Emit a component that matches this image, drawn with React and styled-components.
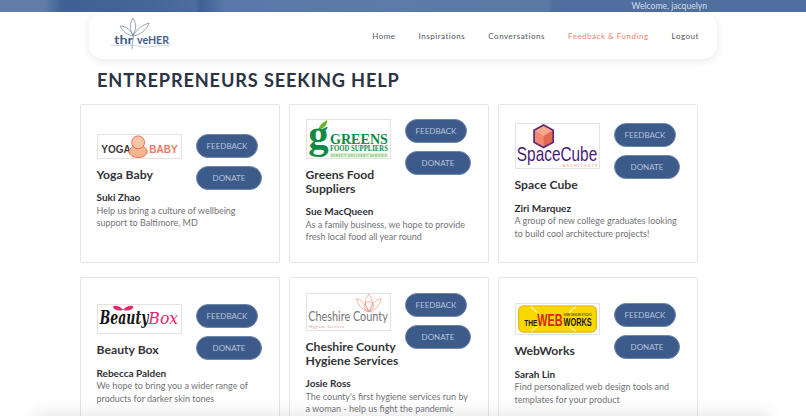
import React from "react";
import styled, { createGlobalStyle } from "styled-components";

const Global = createGlobalStyle`
  html, body {
    margin: 0;
    height: 416px;
    overflow: hidden;
    background: #fff;
    font-family: "Lato", "Open Sans", sans-serif;
  }
  * { box-sizing: border-box; }
`;

const Page = styled.div`
  position: relative;
  width: 806px;
  height: 416px;
  overflow: hidden;
`;

const TopBar = styled.div`
  height: 12px;
  padding-right: 99px;
  display: flex;
  justify-content: flex-end;
  align-items: center;
  background: linear-gradient(90deg, #5f7da8 0, #5f7da8 45px, #3f6193 62px, #456796 150px, #4d6e9d 195px, #3f6193 200px, #44669a 206px, #5a79a8 225px, #5c7ca9 400px, #5a7aa6 548px, #4f6f9e 552px, #4f6f9e 806px);
  color: #d3deee;
  font-size: 8.6px;
`;

const Nav = styled.nav`
  width: 628px;
  height: 46px;
  margin: 1px 0 0 89px;
  padding: 0 18px 0 20px;
  display: flex;
  align-items: center;
  justify-content: space-between;
  border-radius: 14px;
  background: #fff;
  box-shadow: 0 2px 8px rgba(40, 50, 70, 0.1);
`;

const NavLinks = styled.div`
  display: flex;
  gap: 23px;
`;

const NavLink = styled.a`
  font-size: 8px;
  font-weight: 500;
  letter-spacing: 0.5px;
  color: ${(props) => (props.$active ? "#ef8a76" : "#5c5f68")};
`;

const Heading = styled.h1`
  margin: 9px 0 12px 97px;
  font-size: 18.2px;
  line-height: 24px;
  font-weight: 700;
  letter-spacing: 0.85px;
  color: #2b3344;
`;

const Grid = styled.div`
  width: 618px;
  margin-left: 80px;
  display: grid;
  grid-template-columns: repeat(3, 200px);
  grid-auto-rows: 159px;
  column-gap: 9px;
  row-gap: 14px;
`;

const Card = styled.div`
  padding: 0 15px 4px 15.5px;
  display: flex;
  flex-direction: column;
  justify-content: center;
  background: #fff;
  border: 1px solid #e6e6e8;
  border-radius: 2px;
`;

const CardTop = styled.div`
  display: grid;
  grid-template-columns: 99.5px 1fr;
  align-items: start;
`;

const Logo = styled.div`
  width: 85px;
  height: ${(props) => props.$height}px;
  border: 1px solid #e3e3e3;
  background: #fff;
  overflow: hidden;
  svg {
    display: block;
    width: 100%;
    height: 100%;
  }
`;

const Title = styled.h2`
  margin: 9px 0 0;
  font-size: 12.2px;
  line-height: 13.5px;
  font-weight: 700;
  color: #333438;
`;

const Buttons = styled.div`
  display: flex;
  flex-direction: column;
  align-items: flex-start;
  gap: 8px;
  margin-bottom: -20px;
`;

const Pill = styled.button`
  width: ${(props) => props.$width}px;
  height: 24px;
  padding: 0;
  border: 1px solid #6f88ae;
  border-radius: 12px;
  background: #3c5a8a;
  color: #b4c3dc;
  font-family: inherit;
  font-size: 8px;
  text-transform: uppercase;
`;

const Person = styled.h3`
  margin: 10px 0 0;
  font-size: 10px;
  line-height: 13.5px;
  font-weight: 700;
  color: #2f3035;
`;

const Blurb = styled.p`
  margin: 0;
  font-size: 9px;
  line-height: 12.5px;
  color: #727377;
`;

const BottomShade = styled.div`
  position: absolute;
  left: 40px;
  right: 40px;
  bottom: -14px;
  height: 12px;
  box-shadow: 0 0 16px 4px rgba(120, 120, 125, 0.2);
`;

const ThriveLogo = () => (
  <svg width="62" height="36" viewBox="0 0 62 36" fill="none">
    <g stroke="#6d7f9e" strokeWidth="0.7">
      <path d="M24 17 C20 11 21 5 24 0 C27 5 28 11 24 17 Z" />
      <path d="M24 18 C19 17 14 14 11 8 C17 8 22 12 24 18 Z" />
      <path d="M24 18 C27 12 33 7 40 5 C38 12 31 17 24 18 Z" />
      <path d="M24 16 C25 21 23 25 23 31" />
      <path d="M2 27 C12 29 20 25 28 28 C38 31 50 26 61 28" stroke="#9aa9c2" strokeWidth="0.5" />
    </g>
    <text x="5" y="26" fontFamily="Lato, sans-serif" fontWeight="700" fontSize="11.5" fill="#44608c" textLength="19" lengthAdjust="spacingAndGlyphs">thr</text>
    <text x="28" y="26" fontFamily="Lato, sans-serif" fontWeight="700" fontSize="11.5" fill="#44608c" textLength="32" lengthAdjust="spacingAndGlyphs">veHER</text>
  </svg>
);

const YogaLogo = () => (
  <svg viewBox="0 0 85 25">
    <text x="1" y="20" fontFamily="Liberation Sans, sans-serif" fontWeight="700" fontSize="11" fill="#3d3d3d" textLength="32" lengthAdjust="spacingAndGlyphs">YOGA</text>
    <ellipse cx="41" cy="18" rx="10" ry="6.5" fill="#f6b48f" stroke="#e2694a" strokeWidth="1" />
    <circle cx="41" cy="8" r="7" fill="#f8c6a6" stroke="#e2694a" strokeWidth="1" />
    <text x="53" y="20" fontFamily="Liberation Sans, sans-serif" fontWeight="700" fontSize="11" fill="#ec7a64" textLength="31" lengthAdjust="spacingAndGlyphs">BABY</text>
  </svg>
);

const GreensLogo = () => (
  <svg viewBox="0 0 85 40">
    <rect x="23" y="34.5" width="61" height="5" fill="#dcefd2" />
    <path d="M11 10 C12 5 15 3 20 0 C20 6 17 9 11 10 Z" fill="#6cb52d" />
    <text x="0" y="29" fontFamily="Liberation Serif, serif" fontWeight="700" fontSize="43" fill="#0f8a45">g</text>
    <text x="23" y="25" fontFamily="Liberation Serif, serif" fontWeight="700" fontSize="16" fill="#0f8a45" textLength="61" lengthAdjust="spacingAndGlyphs">GREENS</text>
    <text x="23" y="33" fontFamily="Liberation Serif, serif" fontWeight="700" fontSize="8" fill="#0f8a45" textLength="61" lengthAdjust="spacingAndGlyphs">FOOD SUPPLIERS</text>
    <text x="24" y="38.7" fontFamily="Lato, sans-serif" fontSize="4" fill="#6cb56c" textLength="59">DIRECT DELIVERY SERVICE</text>
  </svg>
);

const SpaceLogo = () => (
  <svg viewBox="0 0 85 46">
    <path d="M28 1 L38 6.5 L38 19 L28 24.5 L18 19 L18 6.5 Z" fill="#ef8a70" />
    <path d="M28 1 L38 6.5 L28 12.5 L18 6.5 Z" fill="#f5a78f" />
    <path d="M28 12.5 L38 6.5 L38 19 L28 24.5 Z" fill="#e4674f" />
    <path d="M28 1 L38 6.5 L38 19 L28 24.5 L18 19 L18 6.5 Z" fill="none" stroke="#5d2a7c" strokeWidth="1.8" />
    <text x="0" y="39" fontFamily="Liberation Sans, sans-serif" fontSize="22" fill="#4b1a78" textLength="84" lengthAdjust="spacingAndGlyphs">SpaceCube</text>
    <text x="48" y="45" fontFamily="Lato, sans-serif" fontSize="3.6" fill="#ef8a70" textLength="36">ARCHITECTS</text>
  </svg>
);

const BeautyLogo = () => (
  <svg viewBox="0 0 85 30">
    <path d="M25 5 C21 0 15 0 14 2 C15 6 21 7 25 5 C29 7 35 6 36 2 C35 0 29 0 25 5 Z" fill="#e5286f" />
    <text x="0" y="20" fontFamily="DejaVu Serif, serif" fontStyle="italic" fontWeight="700" fontSize="19" fill="#141414" textLength="52" lengthAdjust="spacingAndGlyphs">Beauty</text>
    <text x="52" y="20" fontFamily="DejaVu Serif, serif" fontStyle="italic" fontSize="18" fill="#e5286f" textLength="32" lengthAdjust="spacingAndGlyphs">Box</text>
  </svg>
);

const CheshireLogo = () => (
  <svg viewBox="0 0 85 38">
    <g fill="none" stroke="#ee8d7c" strokeWidth="0.7">
      <path d="M64 19 C56 17 52 10 51 5 C56 6 61 10 64 19 Z" />
      <path d="M64 19 C72 17 76 10 77 5 C72 6 67 10 64 19 Z" />
      <path d="M64 19 C59 13 59 6 64 0 C69 6 69 13 64 19 Z" />
      <circle cx="64" cy="13" r="5" />
    </g>
    <text x="0" y="29" fontFamily="Lato, sans-serif" fontSize="14" fill="#74767a" textLength="84" lengthAdjust="spacingAndGlyphs">Cheshire County</text>
    <text x="1" y="36" fontFamily="Lato, sans-serif" fontSize="4" fill="#ee8d7c" textLength="37">Hygiene Services</text>
  </svg>
);

const WebLogo = () => (
  <svg viewBox="0 0 85 32">
    <rect x="1" y="2" width="83" height="28" rx="5" fill="#f9d800" stroke="#e2a90a" strokeWidth="1" />
    <g stroke="#fff3a0" strokeWidth="1.4">
      <path d="M14 3 L21 9" />
      <path d="M62 3 L55 9" />
      <path d="M14 29 L21 24" />
      <path d="M62 29 L55 24" />
    </g>
    <text x="7" y="23" fontFamily="Liberation Sans, sans-serif" fontWeight="700" fontSize="10" fill="#181818" textLength="14" lengthAdjust="spacingAndGlyphs">THE</text>
    <text x="21" y="23" fontFamily="Liberation Sans, sans-serif" fontWeight="700" fontSize="18" fill="#d8261c" textLength="27" lengthAdjust="spacingAndGlyphs">WEB</text>
    <text x="49" y="23" fontFamily="Liberation Sans, sans-serif" fontWeight="700" fontSize="12" fill="#181818" textLength="30" lengthAdjust="spacingAndGlyphs">WORKS</text>
    <text x="49" y="13" fontFamily="Liberation Sans, sans-serif" fontSize="3" fill="#181818" textLength="30">WEB DESIGN STUDIO</text>
  </svg>
);

const entrepreneurs = [
  { name: "Yoga Baby", person: "Suki Zhao", text: "Help us bring a culture of wellbeing support to Baltimore, MD", logo: <YogaLogo />, logoHeight: 25 },
  { name: "Greens Food Suppliers", person: "Sue MacQueen", text: "As a family business, we hope to provide fresh local food all year round", logo: <GreensLogo />, logoHeight: 40 },
  { name: "Space Cube", person: "Ziri Marquez", text: "A group of new college graduates looking to build cool architecture projects!", logo: <SpaceLogo />, logoHeight: 46 },
  { name: "Beauty Box", person: "Rebecca Palden", text: "We hope to bring you a wider range of products for darker skin tones", logo: <BeautyLogo />, logoHeight: 30 },
  { name: "Cheshire County Hygiene Services", person: "Josie Ross", text: "The county's first hygiene services run by a woman - help us fight the pandemic", logo: <CheshireLogo />, logoHeight: 38 },
  { name: "WebWorks", person: "Sarah Lin", text: "Find personalized web design tools and templates for your product", logo: <WebLogo />, logoHeight: 32 },
];

const App = () => {
  return (
    <Page>
      <Global />
      <TopBar>Welcome, jacquelyn</TopBar>
      <Nav>
        <ThriveLogo />
        <NavLinks>
          <NavLink>Home</NavLink>
          <NavLink>Inspirations</NavLink>
          <NavLink>Conversations</NavLink>
          <NavLink $active>Feedback &amp; Funding</NavLink>
          <NavLink>Logout</NavLink>
        </NavLinks>
      </Nav>
      <Heading>ENTREPRENEURS SEEKING HELP</Heading>
      <Grid>
        {entrepreneurs.map((item) => (
          <Card key={item.name}>
            <CardTop>
              <div>
                <Logo $height={item.logoHeight}>{item.logo}</Logo>
                <Title>{item.name}</Title>
              </div>
              <Buttons>
                <Pill $width={62}>Feedback</Pill>
                <Pill $width={66}>Donate</Pill>
              </Buttons>
            </CardTop>
            <Person>{item.person}</Person>
            <Blurb>{item.text}</Blurb>
          </Card>
        ))}
      </Grid>
      <BottomShade />
    </Page>
  );
};

export default App;
